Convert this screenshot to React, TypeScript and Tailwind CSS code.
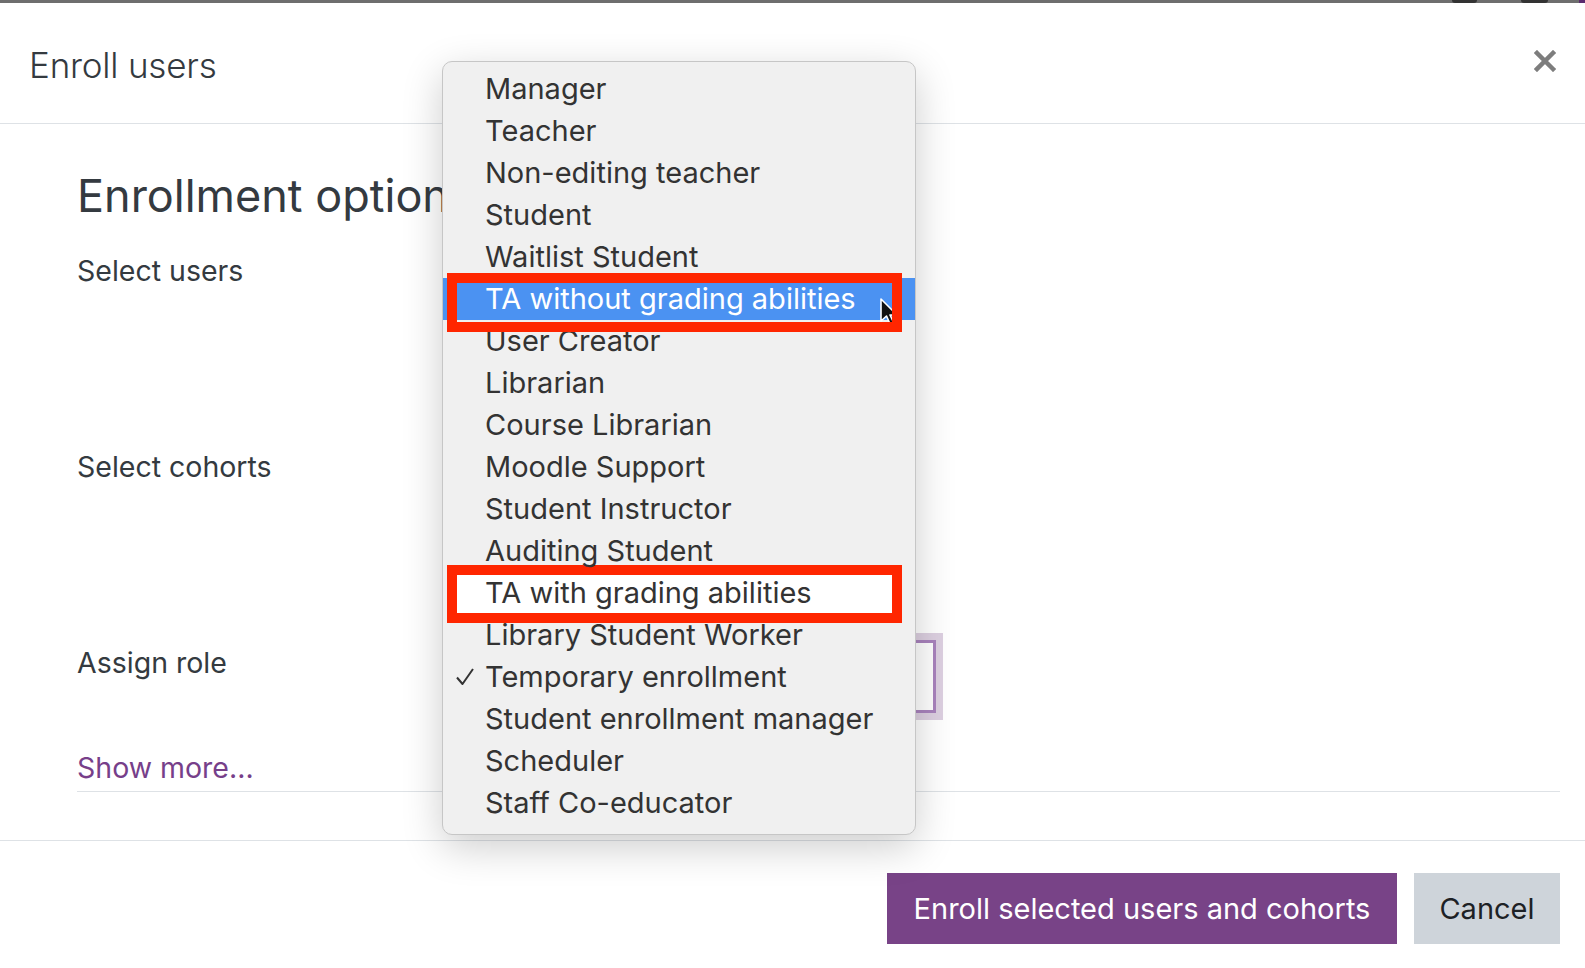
import { Fragment } from "react";

const roles = [
  "Manager",
  "Teacher",
  "Non-editing teacher",
  "Student",
  "Waitlist Student",
  "TA without grading abilities",
  "User Creator",
  "Librarian",
  "Course Librarian",
  "Moodle Support",
  "Student Instructor",
  "Auditing Student",
  "TA with grading abilities",
  "Library Student Worker",
  "Temporary enrollment",
  "Student enrollment manager",
  "Scheduler",
  "Staff Co-educator",
];

const HIGHLIGHTED = "TA without grading abilities";
const CHECKED = "Temporary enrollment";

function CloseIcon() {
  return (
    <svg width="22" height="22" viewBox="0 0 22 22" className="mt-[8px]">
      <path d="M3 3 L19 19 M19 3 L3 19" stroke="#7d7d7d" strokeWidth="4.5" strokeLinecap="square" />
    </svg>
  );
}

function Check() {
  return (
    <svg width="20" height="20" viewBox="0 0 20 20" className="absolute left-[12px] top-[11px]">
      <path d="M2 10.5 L7.5 17 L18 2" fill="none" stroke="#333" strokeWidth="2" strokeLinejoin="round" />
    </svg>
  );
}

function Cursor() {
  return (
    <svg width="20" height="30" viewBox="0 0 20 30" className="absolute left-[437px] top-[236px]">
      <path
        d="M1 1 L1 23 L6.5 18 L10.5 27 L14 25.5 L10 17 L17 17 Z"
        fill="#111"
        stroke="#fff"
        strokeWidth="1.6"
        strokeLinejoin="round"
      />
    </svg>
  );
}

function RoleMenu() {
  return (
    <div className="absolute left-[442px] top-[61px] w-[474px] rounded-[10px] border border-[#c6c6c6] bg-[#f0f0f0] pt-[6px] pb-[10px] shadow-[0_12px_40px_rgba(0,0,0,0.2)]">
      {/* annotation box, filled white behind the text */}
      <div className="absolute left-[4px] top-[503px] h-[58px] w-[455px] border-[10px] border-[#ff2600] bg-white" />
      <ul className="relative">
        {roles.map((r) => (
          <li
            key={r}
            className={
              "relative h-[42px] pl-[42px] text-[29px] leading-[42px] whitespace-nowrap " +
              (r === HIGHLIGHTED ? "bg-[#4b92f2] text-white" : "text-[#333]")
            }
          >
            {r === CHECKED && <Check />}
            {r}
          </li>
        ))}
      </ul>
      <Cursor />
      <div className="absolute left-[4px] top-[211px] h-[59px] w-[455px] border-[10px] border-[#ff2600]" />
    </div>
  );
}

export default function App() {
  return (
    <div className="relative h-[968px] w-[1585px] overflow-hidden bg-white font-['Inter',sans-serif] text-[#343a40]">
      {/* window strip at the very top */}
      <div className="flex h-[3px] bg-[#6e6e6e]">
        <div className="ml-[1452px] h-[3px] w-[25px] rounded-b-full bg-[#333]" />
        <div className="ml-[44px] h-[3px] w-[27px] rounded-b-full bg-[#333]" />
        <div className="ml-auto h-[3px] w-[6px] bg-[#5b2a6e]" />
      </div>

      <div className="flex h-[121px] items-start justify-between border-b border-[#dee2e6] pl-[29px] pr-[29px] pt-[39px]">
        <h5 className="text-[35px] leading-[46px] font-light tracking-[-0.2px]">Enroll users</h5>
        <CloseIcon />
      </div>

      <div className="h-[716px] pl-[77px] pr-[25px] pt-[44px]">
        <h3 className="text-[45px] leading-[56px] font-normal">Enrollment options</h3>

        <div className="mt-[30px] grid h-[196px] grid-cols-[383px_1fr]">
          <div className="text-[28.5px] leading-[34px]">Select users</div>
          <div />
        </div>
        <div className="grid h-[190px] grid-cols-[383px_1fr]">
          <div className="text-[28.5px] leading-[34px]">Select cohorts</div>
          <div />
        </div>
        <div className="grid h-[111px] grid-cols-[383px_1fr]">
          <div className="pt-[6px] text-[28.5px] leading-[34px]">Assign role</div>
          <div>
            <div className="h-[73px] w-[476px] border-[3px] border-[#a983bd] bg-white shadow-[0_0_0_7px_rgba(120,67,135,0.25)]" />
          </div>
        </div>
        <div className="border-b border-[#dee2e6] pb-[6px]">
          <a className="text-[28.5px] leading-[34px] text-[#773f8a]">Show more...</a>
        </div>
      </div>

      <div className="flex justify-end gap-[17px] border-t border-[#dee2e6] pr-[25px] pt-[32px]">
        <button className="h-[71px] w-[510px] bg-[#784387] text-[29px] text-white">
          Enroll selected users and cohorts
        </button>
        <button className="h-[71px] w-[146px] bg-[#ced4da] text-[29px] text-[#1d2125]">Cancel</button>
      </div>

      <RoleMenu />
      <Fragment />
    </div>
  );
}
